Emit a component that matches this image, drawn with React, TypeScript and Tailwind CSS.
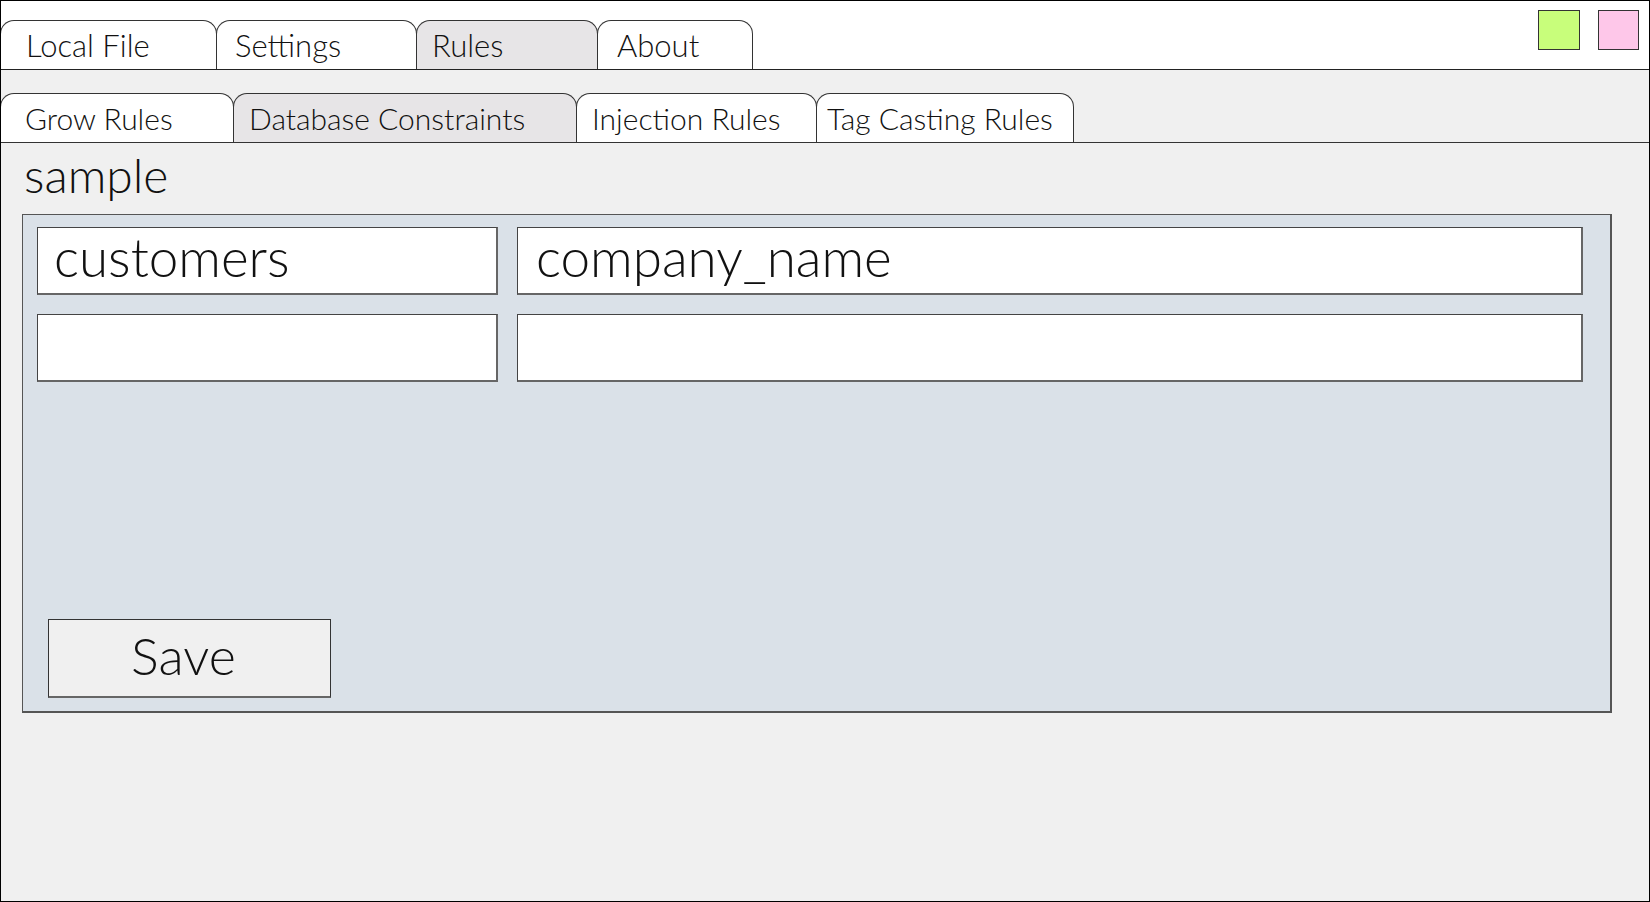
const topTabs = [
  { label: "Local File", width: "w-[217px]", pad: "pl-[25px]", active: false },
  { label: "Settings", width: "w-[201px]", pad: "pl-[18px]", active: false },
  { label: "Rules", width: "w-[182px]", pad: "pl-[15px]", active: true },
  { label: "About", width: "w-[156px]", pad: "pl-[19px]", active: false },
];

const subTabs = [
  { label: "Grow Rules", width: "w-[234px]", pad: "pl-[24px]", active: false },
  { label: "Database Constraints", width: "w-[344px]", pad: "pl-[15px]", active: true },
  { label: "Injection Rules", width: "w-[241px]", pad: "pl-[15px]", active: false },
  { label: "Tag Casting Rules", width: "w-[258px]", pad: "pl-[10px]", active: false },
];

type Tab = { label: string; width: string; pad: string; active: boolean };

function TabStrip({ tabs, size }: { tabs: Tab[]; size: string }) {
  return (
    <div className="flex items-end h-full">
      {tabs.map((tab) => (
        <div
          key={tab.label}
          className={`${tab.width} ${tab.pad} ${size} -ml-px h-[49px] flex items-center rounded-t-[14px] border border-b-0 border-[#333] font-light text-[#111] whitespace-nowrap ${
            tab.active ? "bg-[#e7e5e7]" : "bg-white"
          }`}
        >
          {tab.label}
        </div>
      ))}
    </div>
  );
}

function Field({ value, width, pad }: { value?: string; width: string; pad: string }) {
  return (
    <div
      className={`${width} ${pad} h-[68px] flex items-center pb-[9px] bg-white border border-[#444] border-r-2 border-b-2 border-r-[#666] border-b-[#666] text-[53px] font-light text-[#111] leading-none`}
    >
      {value}
    </div>
  );
}

export default function App() {
  return (
    <div
      className="w-[1650px] h-[902px] border border-black bg-[#f0f0f0] flex flex-col overflow-hidden"
      style={{ fontFamily: "Lato, 'Open Sans', sans-serif" }}
    >
      {/* top bar */}
      <div className="h-[69px] shrink-0 bg-white border-b border-[#222] flex justify-between">
        <TabStrip tabs={topTabs} size="text-[31px]" />
        <div className="flex gap-[18px] pt-[9px] pr-[10px]">
          <div className="w-[42px] h-[40px] bg-[#c8fe7b] border border-[#333]" />
          <div className="w-[41px] h-[40px] bg-[#fec7e9] border border-[#333]" />
        </div>
      </div>

      {/* sub tabs */}
      <div className="h-[73px] shrink-0 border-b border-[#333]">
        <TabStrip tabs={subTabs} size="text-[30px]" />
      </div>

      <div className="h-[71px] shrink-0 pl-[23px] pt-[8px] text-[48px] leading-[48px] font-light text-[#111]">
        sample
      </div>

      {/* constraints panel */}
      <div className="ml-[21px] w-[1590px] h-[499px] bg-[#dae1e8] border border-[#555] border-r-2 border-b-2 flex flex-col pt-[12px] pl-[14px] pb-[13px]">
        <div className="flex gap-[19px]">
          <Field value="customers" width="w-[461px]" pad="pl-[16px]" />
          <Field value="company_name" width="w-[1066px]" pad="pl-[18px]" />
        </div>
        <div className="flex gap-[19px] mt-[19px]">
          <Field width="w-[461px]" pad="pl-[16px]" />
          <Field width="w-[1066px]" pad="pl-[18px]" />
        </div>
        <div className="flex-1" />
        <button className="ml-[11px] w-[283px] h-[79px] bg-[#f0f0f0] border border-[#333] border-b-2 border-b-[#666] text-[52px] font-light text-[#111] leading-none flex items-center justify-center pr-[12px] pb-[7px]">
          Save
        </button>
      </div>
    </div>
  );
}
